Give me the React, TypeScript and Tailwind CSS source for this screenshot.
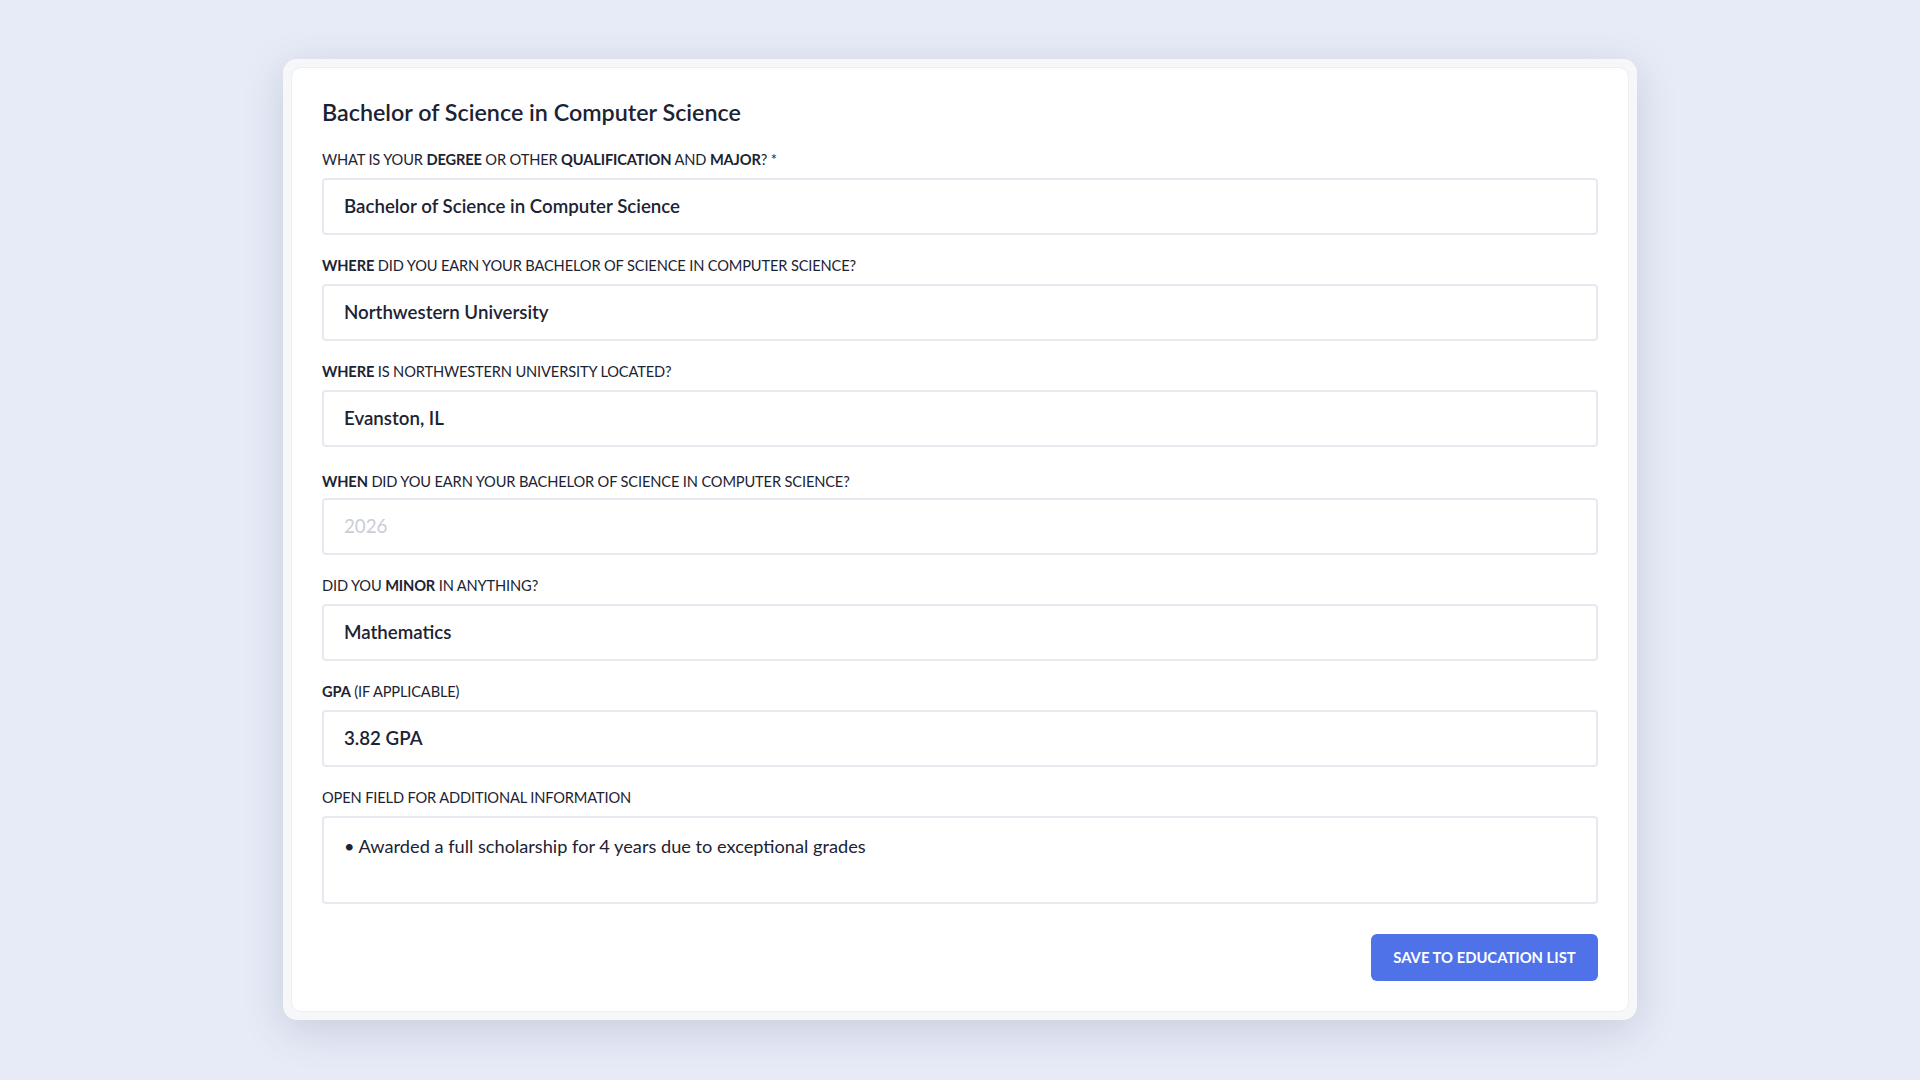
import React from 'react';

type Part = { t: string; b?: boolean };

const fields: { label: Part[]; value: string; placeholder?: boolean; extraTop?: boolean }[] = [
  {
    label: [
      { t: 'WHAT IS YOUR ' },
      { t: 'DEGREE', b: true },
      { t: ' OR OTHER ' },
      { t: 'QUALIFICATION', b: true },
      { t: ' AND ' },
      { t: 'MAJOR', b: true },
      { t: '? *' },
    ],
    value: 'Bachelor of Science in Computer Science',
  },
  {
    label: [{ t: 'WHERE', b: true }, { t: ' DID YOU EARN YOUR BACHELOR OF SCIENCE IN COMPUTER SCIENCE?' }],
    value: 'Northwestern University',
  },
  {
    label: [{ t: 'WHERE', b: true }, { t: ' IS NORTHWESTERN UNIVERSITY LOCATED?' }],
    value: 'Evanston, IL',
  },
  {
    label: [{ t: 'WHEN', b: true }, { t: ' DID YOU EARN YOUR BACHELOR OF SCIENCE IN COMPUTER SCIENCE?' }],
    value: '2026',
    placeholder: true,
    extraTop: true,
  },
  {
    label: [{ t: 'DID YOU ' }, { t: 'MINOR', b: true }, { t: ' IN ANYTHING?' }],
    value: 'Mathematics',
  },
  {
    label: [{ t: 'GPA', b: true }, { t: ' (IF APPLICABLE)' }],
    value: '3.82 GPA',
  },
];

function Label({ parts, tight }: { parts: Part[]; tight?: boolean }) {
  return (
    <div className={tight ? 'text-[14.65px] leading-5 text-[#1c2333] tracking-[-0.15px] mb-[6px]' : 'text-[14.65px] leading-5 text-[#1c2333] tracking-[-0.15px] mb-2'}>
      {parts.map((p, i) => (
        <span key={i} className={p.b ? 'font-bold' : 'font-normal'}>
          {p.t}
        </span>
      ))}
    </div>
  );
}

export default function App() {
  return (
    <div
      className="min-h-screen bg-[#e7ebf7] pt-[59px]"
      style={{ fontFamily: 'Lato, "Open Sans", sans-serif' }}
    >
      <div className="mx-auto w-[1354px] rounded-[14px] bg-[#f6f7f9] p-2 shadow-[0_10px_40px_rgba(60,70,110,0.18)]">
        <div className="rounded-[10px] border border-[#eceef2] bg-white px-[30px] pt-7 pb-[30px]">
          <h1 className="text-[23.3px] leading-8 font-semibold text-[#1c2333] mb-[22px]">
            Bachelor of Science in Computer Science
          </h1>

          {fields.map((f, i) => (
            <div key={i} className={f.extraTop ? 'mt-[25px] mb-[21px]' : 'mb-[21px]'}>
              <Label parts={f.label} tight={f.extraTop} />
              <div className="flex h-[57px] items-center rounded-[4px] border-2 border-[#e6e9f0] bg-white px-5">
                <span
                  className={
                    f.placeholder
                      ? 'text-[18.7px] text-[#c9cdd5] font-normal'
                      : 'text-[18.7px] text-[#1c2333] font-semibold'
                  }
                >
                  {f.value}
                </span>
              </div>
            </div>
          ))}

          <div>
            <Label parts={[{ t: 'OPEN FIELD FOR ADDITIONAL INFORMATION' }]} />
            <div className="h-[88px] rounded-[4px] border-2 border-[#e6e9f0] bg-white px-5 pt-[15px]">
              <span className="text-[18.2px] text-[#1c2333]">• Awarded a full scholarship for 4 years due to exceptional grades</span>
            </div>
          </div>

          <div className="mt-[30px] flex justify-end">
            <button className="h-[47px] w-[227px] rounded-[6px] bg-[#5072e9] text-[14.8px] font-bold text-white">
              SAVE TO EDUCATION LIST
            </button>
          </div>
        </div>
      </div>
    </div>
  );
}
